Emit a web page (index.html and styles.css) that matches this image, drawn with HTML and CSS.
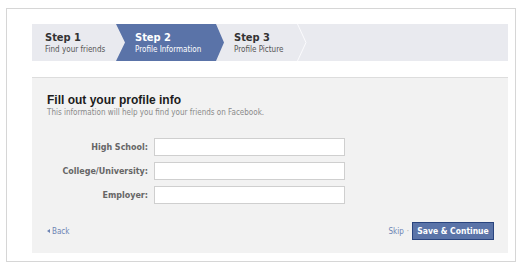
FILE: index.html
```html
<!DOCTYPE html>
<html>
<head>
<meta charset="utf-8">
<link rel="stylesheet" href="styles.css">
</head>
<body>
<div class="frame">
  <div class="steps">
    <div class="step step-done">
      <div class="step-title">Step 1</div>
      <div class="step-sub">Find your friends</div>
    </div>
    <div class="step step-active">
      <div class="step-title">Step 2</div>
      <div class="step-sub">Profile Information</div>
    </div>
    <div class="step step-next">
      <div class="step-text">
        <div class="step-title">Step 3</div>
        <div class="step-sub">Profile Picture</div>
      </div>
      <svg class="sep" width="10" height="37" viewBox="0 0 10 37"><polyline points="0.5,0 9,18.5 0.5,37" fill="none" stroke="#fbfbfd" stroke-width="1"/></svg>
    </div>
  </div>
  <div class="panel">
    <h1 class="title">Fill out your profile info</h1>
    <p class="subtitle">This information will help you find your friends on Facebook.</p>
    <div class="form">
      <label class="label">High School:</label><input class="field" type="text">
      <label class="label">College/University:</label><input class="field" type="text">
      <label class="label">Employer:</label><input class="field" type="text">
    </div>
    <div class="footer">
      <a class="back"><span class="tri"></span>Back</a>
      <div class="actions">
        <a class="skip">Skip</a><span class="dot">·</span>
        <button class="btn">Save &amp; Continue</button>
      </div>
    </div>
  </div>
</div>
</body>
</html>
```
FILE: styles.css
```css
* { box-sizing: border-box; }
body {
  margin: 0;
  background: #ffffff;
  font-family: "DejaVu Sans Condensed", "DejaVu Sans", sans-serif;
  width: 525px;
  height: 266px;
  overflow: hidden;
}
.frame {
  margin: 8px 0 0 6px;
  width: 510px;
  height: 254px;
  border: 1px solid #d6d6d6;
  padding: 15px 7px 0 25px;
}
.steps {
  display: flex;
  height: 37px;
  background: #e9eaef;
}
.step {
  display: flex;
  flex-direction: column;
  justify-content: center;
  padding-top: 1px;
}
.step-title {
  font-weight: bold;
  font-size: 11px;
  color: #333333;
  line-height: 12px;
}
.step-sub {
  font-size: 8px;
  color: #555555;
  line-height: 11px;
}
.step-done {
  width: 84px;
  padding-left: 13px;
}
.step-active {
  width: 108px;
  padding-left: 19px;
  background: #5a73a8;
  clip-path: polygon(0 0, calc(100% - 8px) 0, 100% 50%, calc(100% - 8px) 100%, 0 100%, 9px 50%);
}
.step-active .step-title,
.step-active .step-sub { color: #ffffff; }
.step-next {
  flex-direction: row;
  align-items: stretch;
  padding-left: 10px;
  padding-top: 0;
}
.step-text {
  width: 63px;
  display: flex;
  flex-direction: column;
  justify-content: center;
  padding-top: 1px;
}
.sep { display: block; }
.panel {
  margin-top: 16px;
  height: 176px;
  background: #f2f2f2;
  border-top: 1px solid #dddddd;
  padding: 15px 0 0 15px;
}
.title {
  margin: 0;
  font-family: "Liberation Sans", Arial, sans-serif;
  font-size: 12px;
  line-height: 14px;
  font-weight: bold;
  color: #1c1c1c;
}
.subtitle {
  margin: 1px 0 0;
  font-size: 8px;
  line-height: 10px;
  color: #8a8a8a;
}
.form {
  margin-top: 20px;
  display: grid;
  grid-template-columns: 101px 191px;
  column-gap: 6px;
  row-gap: 6px;
  align-items: center;
}
.label {
  text-align: right;
  font-family: "DejaVu Sans", sans-serif;
  font-size: 8px;
  font-weight: bold;
  color: #666666;
}
.field {
  height: 18px;
  border: 1px solid #cfcfcf;
  background: #ffffff;
  margin: 0;
}
.footer {
  margin-top: 18px;
  display: flex;
  justify-content: space-between;
  align-items: center;
  padding-right: 14px;
}
.back {
  font-size: 8px;
  color: #6d84b4;
  display: flex;
  align-items: center;
}
.tri {
  width: 0;
  height: 0;
  border-top: 2.5px solid transparent;
  border-bottom: 2.5px solid transparent;
  border-right: 3px solid #6d84b4;
  margin-right: 2px;
}
.actions {
  display: flex;
  align-items: center;
}
.skip {
  font-size: 8px;
  color: #6d84b4;
}
.dot {
  font-size: 8px;
  color: #aaaaaa;
  margin: 0 3px 0 3px;
}
.btn {
  height: 18px;
  width: 82px;
  padding: 0;
  background: #5b74a8;
  border: 1px solid #29447e;
  color: #ffffff;
  font-family: inherit;
  font-weight: bold;
  font-size: 8.5px;
}
```
